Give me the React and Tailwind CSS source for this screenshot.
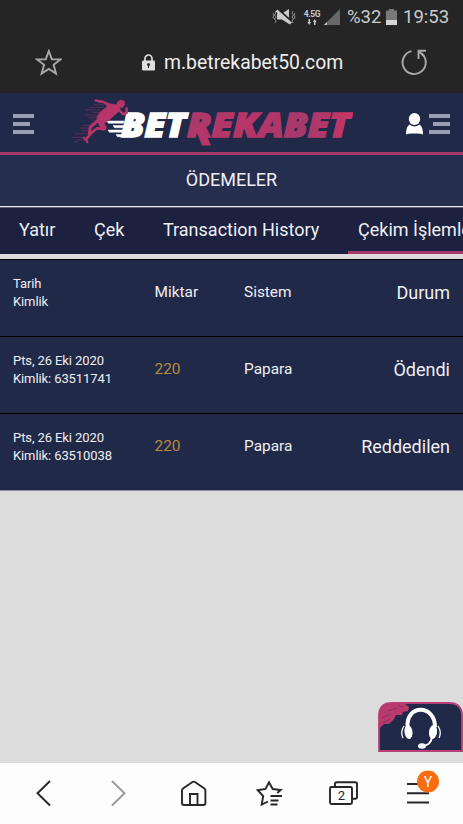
import React from 'react';

const payments = [
    { id: '63511741', date: 'Pts, 26 Eki 2020', amount: '220', system: 'Papara', status: 'Ödendi' },
    { id: '63510038', date: 'Pts, 26 Eki 2020', amount: '220', system: 'Papara', status: 'Reddedilen' }
];

const StatusBar = () => (
    <div className="flex h-[34px] items-center justify-end pr-[12px] text-[18.5px] leading-none text-[#cbcbcb]">
        <svg className="mr-[7px]" width="24" height="18" viewBox="0 0 24 18" fill="none">
            <path d="M5 5.500h5l7-4.500v15l-7-4.500H5z" fill="#cbcbcb" />
            <path d="M6 1l14 13" stroke="#252525" strokeWidth="2" />
            <path d="M4.500 2.500l14.500 13" stroke="#cbcbcb" strokeWidth="2.400" />
            <path d="M3 3l1 2-1.500 2 1.500 2-1.500 2 1.500 2-1 2M1 5l1 2-1 2 1 2M21 3l-1 2 1.500 2-1.500 2 1.500 2-1.500 2 1 2M23 5l-1 2 1 2-1 2" stroke="#aaa" strokeWidth=".8" />
        </svg>
        <div className="mr-[3px] flex w-[18px] flex-col items-center">
            <span className="text-[8.5px] leading-[9px] font-bold tracking-[-0.4px]">4.5G</span>
            <svg width="10" height="6" viewBox="0 0 10 6">
                <path d="M1.500 0h1.500v3h1l-1.800 3L.5 3h1zM7 6h1.500V3h1L7.800 0 6 3h1z" fill="#cbcbcb" />
            </svg>
        </div>
        <svg className="mr-[7px]" width="16" height="16" viewBox="0 0 16 16">
            <path d="M0 16L16 0v16z" fill="#686868" />
            <path d="M0 16l3-3v3z" fill="#cbcbcb" />
        </svg>
        <span className="w-[35px]"><span className="block w-max">%32</span></span>
        <svg className="mr-[6px] ml-[4px]" width="11" height="16" viewBox="0 0 11 16">
            <path d="M3 0h5v1.500h3V16H0V1.500h3z" fill="#787878" />
            <path d="M0 11h11v5H0z" fill="#d5d5d5" />
        </svg>
        <span className="block w-[48px]">19:53</span>
    </div>
);

const AddressBar = () => (
    <div className="flex h-[59px] items-center pr-[35px] pb-[3px] pl-[35px]">
        <svg width="27" height="27" viewBox="0 0 27 27" fill="none" stroke="#a9a9a9" strokeWidth="1.900">
            <path d="M13.800 2l3 8.200 8.700.200-6.900 5.400 2.400 8.700-7.200-4.600-7.200 4.600 2.500-8.700-7-5.400 8.700-.200z" />
        </svg>
        <div className="ml-[80px] flex items-center">
            <svg className="mr-[9px]" width="13" height="17" viewBox="0 0 13 17" fill="none">
                <path d="M3 8V4.500a3.500 3.500 0 0 1 7 0V8" stroke="#dedede" strokeWidth="1.700" />
                <rect y="6.500" width="13" height="10" rx="1.200" fill="#dedede" />
                <circle cx="6.500" cy="10.500" r="1.500" fill="#252525" />
                <path d="M6 11h1v3H6z" fill="#252525" />
            </svg>
            <span className="pt-[2px] text-[19.4px] leading-none text-[#ededed]">m.betrekabet50.com</span>
        </div>
        <svg className="ml-auto" width="28" height="27" viewBox="0 0 28 27" fill="none" stroke="#a9a9a9" strokeWidth="1.900">
            <path d="M11.500 2.200A11.600 11.600 0 1 0 21.500 4.500" />
            <path d="M26 1.800h-7.500V10M19 2.500l5 4.500" />
        </svg>
    </div>
);

const Runner = () => (
    <g transform="translate(68 95) scale(.3333)" fill="none" stroke="#b73569" strokeLinejoin="round" strokeLinecap="round">
        <path d="M147 25l3-6 8-4 11 3 1 8-3 9-6 3-7-2-5 6-8-6z" fill="#b73569" strokeWidth="1" />
        <path d="M112 27l18 0 18 3 9 10-6 11-14 11-12 12-14 9-18 2-7-5 2-14 8-14 14-11 8-7z" fill="#b73569" strokeWidth="2" />
        {/* arms */}
        <path d="M83 16l6 2 17 3 22 10" strokeWidth="7" />
        <path d="M151 43l15 15 10-5 0-12" strokeWidth="8" />
        {/* front leg, then trailing leg */}
        <path d="M96 78l11 20" strokeWidth="17" />
        <path d="M109 101l-22-1-17 14-15 18" strokeWidth="8" />
        <path d="M88 78l-21 18-3 19" strokeWidth="9" />
        <path d="M48 128l7 8 3 5" strokeWidth="7" />
        <path d="M78 29h30M65 37h42M54 45h43M74 52h22M52 60h38M62 67h25M68 75h18M46 91h19M36 99h26M42 107h18M22 116h36M12 127h34M28 135h18M20 140h10" strokeWidth="2" opacity=".55" />
    </g>
);

const Logo = () => (
    <svg width="284" height="52" viewBox="69 97 284 52">
        <defs>
            <linearGradient id="brand" x1="0" y1="0" x2="1" y2="0">
                <stop offset="0" stopColor="#a93a6c" />
                <stop offset=".35" stopColor="#b83567" />
                <stop offset=".7" stopColor="#a7396d" />
                <stop offset="1" stopColor="#c63664" />
            </linearGradient>
        </defs>
        <path d="M107 121h17l-.6 2.200h-15zM113 125.500h12l-.6 2.200h-10zM108 130h16l-.6 2.200h-14zM116 134.500h10l-.6 2.200h-8z" fill="#fff" stroke="#fff" strokeWidth=".5" />
        <text x="121" y="136.500" textLength="65" lengthAdjust="spacingAndGlyphs" fill="#fff" stroke="#fff" strokeWidth="1.500" className="font-['Open_Sans'] text-[33.5px] font-extrabold italic">BET</text>
        <text x="187" y="136.500" textLength="163" lengthAdjust="spacingAndGlyphs" fill="url(#brand)" stroke="url(#brand)" strokeWidth="1.500" className="font-['Open_Sans'] text-[33.5px] font-extrabold italic">REKABET</text>
        <path d="M195 128l8-1 8 18.500h-9z" fill="#b53668" />
        <Runner />
    </svg>
);

const SiteHeader = () => (
    <header className="flex h-[62px] items-center border-b-[3px] border-[#a63867] bg-[#212949] pl-[13px]">
        <div className="flex w-[56px] flex-col gap-[4px] pt-[2px]">
            <i className="h-[4px] w-[21px] bg-[#9b9fb0]" />
            <i className="h-[4px] w-[17px] bg-[#9b9fb0]" />
            <i className="h-[4px] w-[21px] bg-[#9b9fb0]" />
        </div>
        <Logo />
        <svg className="mt-[2px] ml-[53px]" width="17" height="22" viewBox="0 0 17 22" fill="#fff">
            <ellipse cx="8.500" cy="6" rx="5.700" ry="6" />
            <path d="M3.500 11.500q5 4 10 0 3.500 2 3.500 10-3-1.500-8.500-1-5.500-.5-8.500 1 0-8 3.500-10z" />
        </svg>
        <div className="ml-[6px] flex flex-col items-end gap-[4px] pt-[2px]">
            <i className="h-[4px] w-[21px] bg-[#9b9fb0]" />
            <i className="h-[4px] w-[17px] bg-[#9b9fb0]" />
            <i className="h-[4px] w-[21px] bg-[#9b9fb0]" />
        </div>
    </header>
);

const Tabs = () => (
    <nav className="flex h-[46px] overflow-hidden bg-[#1b213f] text-[18px] leading-[44px] whitespace-nowrap">
        <span className="w-[84px] shrink-0 pl-[19px]">Yatır</span>
        <span className="w-[69px] shrink-0 pl-[10px]">Çek</span>
        <span className="w-[195px] shrink-0 pl-[10px]">Transaction History</span>
        <span className="shrink-0 border-b-[3px] border-[#a93868] px-[10px]">Çekim İşlemleri</span>
    </nav>
);

const Row = ({ first, second, amount, system, status, amountClass }) => (
    <div className="flex h-[77px] border-t border-black bg-[#212949] pr-[13px] pl-[13px]">
        <div className="w-[141.5px] pt-[15px] text-[13px] leading-[18px] tracking-[-0.1px]">
            <div>{first}</div>
            <div>{second}</div>
        </div>
        <div className={`w-[89.5px] pt-[22px] leading-[21px] ${amountClass}`}>{amount}</div>
        <div className="pt-[22px] text-[15.4px] leading-[21px]">{system}</div>
        <div className="ml-auto pt-[22px] text-[18px] leading-[21px]">{status}</div>
    </div>
);

const SupportWidget = () => (
    <div className="mb-[11px] ml-auto h-[50px] w-[85px]">
        <svg width="85" height="50" viewBox="0 0 85 50" fill="none">
            <path d="M1 49V14Q1 1 14 1h57q13 0 13 13v35z" fill="#212949" stroke="#b64077" strokeWidth="1.800" />
            <path d="M1 22V14Q2 2 15 1h11l5 4-1 4-5 1-1 3-6 0-2 4-5 5-5 0-4 4z" fill="#b93a6c" />
            <path d="M4 16l8-4M5 21l7-4M10 9l9-3M20 4l6 1" stroke="#7c2856" strokeWidth=".8" />
            <path d="M29.500 25C28 2 57 2 57 25" stroke="#fff" strokeWidth="4" />
            <ellipse cx="30.500" cy="30" rx="4" ry="7" transform="rotate(-7 30 30)" fill="#fff" />
            <ellipse cx="55" cy="30" rx="4" ry="7" transform="rotate(7 55 30)" fill="#fff" />
            <path d="M26 24q-4 6-1 12M60 24q4 6 1 12" stroke="#fff" strokeWidth="1.300" />
            <path d="M54 35q-1 8-9 9" stroke="#fff" strokeWidth="2" />
            <ellipse cx="44" cy="44" rx="4" ry="2.800" fill="#fff" />
        </svg>
    </div>
);

const BottomBar = () => (
    <footer className="h-[61px] bg-[#fdfdfd]">
        <svg width="463" height="61" viewBox="0 763 463 61" fill="none" stroke="#262626" strokeWidth="1.900">
            <path d="M50 781l-12.500 12.200L50 805.500" />
            <path d="M112 781l12.500 12.200L112 805.500" stroke="#999" />
            <path d="M182 790.500q0-1.200 1-2l9.500-6.500q1.200-.8 2.400 0l9.500 6.500q1 .8 1 2V803q0 2-2 2H184q-2 0-2-2z" />
            <path d="M190 805v-11h7.500v11" />
            <path d="M268 801.500l-6.300 3 1.500-8.500-5.500-5.800 7.800-1.200 3.500-6.800 3.700 6.800 8 1-3.500 3" />
            <path d="M270.500 796h11.500M270.500 800.500h8M270.500 804.500h7" />
            <path d="M335 786v-2q0-1.800 1.800-1.800h18.400q1.800 0 1.800 1.800v13q0 1.800-1.800 1.800h-3" />
            <rect x="330" y="787" width="22" height="17" rx="1.500" />
            <path d="M407 784h22M407 793.300h22M407 802.500h22" />
            <circle cx="428" cy="781.500" r="11" fill="#fa6c10" stroke="none" />
            <text x="341.500" y="800" textAnchor="middle" fill="#262626" stroke="none" className="text-[13px]">2</text>
            <text x="428" y="786.500" textAnchor="middle" fill="#fff" stroke="none" className="text-[14px]">Y</text>
        </svg>
    </footer>
);

export default function App() {
    return (
        <div className="flex h-[824px] w-[463px] flex-col overflow-hidden bg-[#dcdcdc] font-['Roboto',sans-serif] text-[#efeff2]">
            <div className="h-[93px] bg-[#252525]">
                <StatusBar />
                <AddressBar />
            </div>
            <SiteHeader />
            <h1 className="h-[51px] bg-[#262e50] text-center text-[18px] leading-[50px]">ÖDEMELER</h1>
            <div className="h-[2px] border-b border-[#5d6470] bg-[#e8e8e8]" />
            <Tabs />
            <main className="mt-[5px] border-b border-[#8b8e9f]">
                <Row first="Tarih" second="Kimlik" amount="Miktar" system="Sistem" status="Durum" amountClass="text-[15.4px]" />
                {payments.map(payment => (
                    <Row
                        key={payment.id}
                        first={payment.date}
                        second={`Kimlik: ${payment.id}`}
                        amount={payment.amount}
                        system={payment.system}
                        status={payment.status}
                        amountClass="text-[15.4px] text-[#b88b3c]"
                    />
                ))}
            </main>
            <div className="mt-auto">
                <SupportWidget />
                <BottomBar />
            </div>
        </div>
    );
}
